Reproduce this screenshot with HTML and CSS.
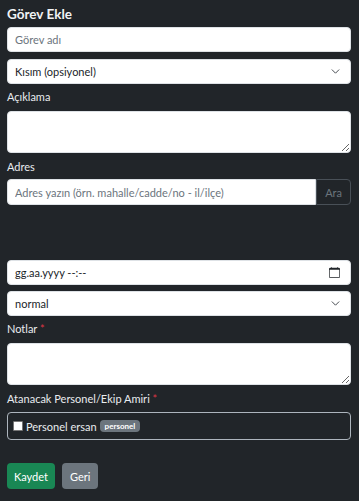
FILE: index.html
```html
<!DOCTYPE html>
<html lang="tr">
<head>
<meta charset="utf-8">
<link rel="stylesheet" href="styles.css">
</head>
<body>
<form class="page">
  <h2 class="title">Görev Ekle</h2>
  <input class="field" type="text" placeholder="Görev adı">
  <select class="field select"><option>Kısım (opsiyonel)</option></select>
  <label class="label">Açıklama</label>
  <textarea class="field area"></textarea>
  <label class="label">Adres</label>
  <div class="group">
    <input class="field grow" type="text" placeholder="Adres yazın (örn. mahalle/cadde/no - il/ilçe)">
    <button type="button" class="ara">Ara</button>
  </div>
  <div class="spacer"></div>
  <div class="field date"><span>gg.aa.yyyy --:--</span>
    <svg width="11" height="11" viewBox="0 0 16 16"><path d="M3.5 0a.5.5 0 0 1 .5.5V1h8V.5a.5.5 0 0 1 1 0V1h1a2 2 0 0 1 2 2v11a2 2 0 0 1-2 2H2a2 2 0 0 1-2-2V3a2 2 0 0 1 2-2h1V.5a.5.5 0 0 1 .5-.5zM1 4v10a1 1 0 0 0 1 1h12a1 1 0 0 0 1-1V4H1z" fill="#212529"/></svg>
  </div>
  <select class="field select"><option>normal</option></select>
  <label class="label">Notlar <span class="req">*</span></label>
  <textarea class="field area"></textarea>
  <label class="label">Atanacak Personel/Ekip Amiri <span class="req">*</span></label>
  <div class="box">
    <label class="check"><span class="cb"></span>Personel ersan <span class="badge">personel</span></label>
  </div>
  <div class="actions">
    <button type="button" class="btn save">Kaydet</button>
    <button type="button" class="btn back">Geri</button>
  </div>
</form>
</body>
</html>
```
FILE: styles.css
```css
html, body { margin: 0; background: #212529; }
body { font-family: Lato, "Liberation Sans", sans-serif; color: #dee2e6; font-size: 11px; }
.page { padding: 6px 8px 7px 7px; display: flex; flex-direction: column; }
.title { font-size: 13.5px; font-weight: 700; margin: 0 0 5px; line-height: 16px; color: #f1f3f5; }
.field {
  box-sizing: border-box; height: 25px; background: #fff; border: 1px solid #dee2e6; border-radius: 4px;
  font-family: inherit; font-size: 11px; color: #212529; padding: 0 7px; margin: 0 0 7px; width: 100%;
  flex: none;
}
.field::placeholder { color: #6c757d; }
.select { appearance: none; -webkit-appearance: none; margin-bottom: 6px;
  background: #fff url("data:image/svg+xml,%3csvg xmlns='http://www.w3.org/2000/svg' viewBox='0 0 16 16'%3e%3cpath fill='none' stroke='%23343a40' stroke-linecap='round' stroke-linejoin='round' stroke-width='1.6' d='m2 5 6 6 6-6'/%3e%3c/svg%3e") no-repeat right 10px center / 9px 9px; }
.area { height: 42px; resize: vertical; margin-bottom: 7px; }
.label { line-height: 14px; margin: 0 0 7px; color: #e9ecef; }
.req { color: #dc3545; }
.group { display: flex; margin-top: -2px; }
.grow { flex: 1; margin: 0; border-radius: 4px 0 0 4px; height: 26px; }
.ara { height: 26px; box-sizing: border-box; background: transparent; border: 1px solid #495057; border-radius: 0 4px 4px 0;
  color: #6c757d; font-family: inherit; font-size: 11px; padding: 0 8px; }
.spacer { height: 55px; }
.date { display: flex; align-items: center; justify-content: space-between; padding-right: 10px; margin-bottom: 6px; }
.box { border: 1px solid #adb5bd; border-radius: 4px; height: 28px; box-sizing: border-box; display: flex; align-items: center; padding: 0 5px; margin: -1px 0 23px; }
.check { display: flex; align-items: center; color: #e9ecef; }
.cb { width: 8px; height: 8px; background: #fff; border: 1px solid #767676; border-radius: 1px; margin-right: 3px; }
.badge { background: #6c757d; color: #fff; font-size: 8px; font-weight: 700; border-radius: 4px; padding: 2px 5px; margin-left: 3px; line-height: 8px; }
.actions { display: flex; gap: 7px; }
.btn { height: 26px; border: none; border-radius: 4px; color: #fff; font-family: inherit; font-size: 11px; padding: 0 8px; }
.save { background: #198754; padding: 0 7px; }
.back { background: #6c757d; }
```
